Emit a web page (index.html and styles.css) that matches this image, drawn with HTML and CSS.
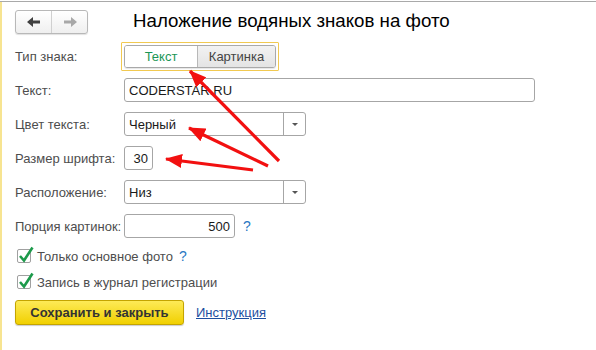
FILE: index.html
```html
<!DOCTYPE html>
<html>
<head>
<meta charset="utf-8">
<link rel="stylesheet" href="styles.css">
</head>
<body>
<div class="topline"></div>
<div class="wrap">
  <div class="side"></div>
  <div class="content">
    <div class="header">
      <div class="nav">
        <div class="navbtn">
          <svg width="14" height="10" viewBox="0 0 14 10"><path d="M0 5 L6 0 L6 3.5 L13 3.5 L13 6.5 L6 6.5 L6 10 Z" fill="#404040"/></svg>
        </div>
        <div class="navbtn">
          <svg width="14" height="10" viewBox="0 0 14 10"><path d="M14 5 L8 0 L8 3.5 L1 3.5 L1 6.5 L8 6.5 L8 10 Z" fill="#a8a8a8"/></svg>
        </div>
      </div>
      <div class="title">Наложение водяных знаков на фото</div>
    </div>
    <div class="form">
      <div class="row row-type">
        <div class="label">Тип знака:</div>
        <div class="group">
          <div class="seg">
            <div class="seg-item seg-on">Текст</div>
            <div class="seg-item seg-off">Картинка</div>
          </div>
        </div>
      </div>
      <div class="row">
        <div class="label">Текст:</div>
        <div class="field f-text">CODERSTAR.RU</div>
      </div>
      <div class="row">
        <div class="label">Цвет текста:</div>
        <div class="field f-select"><span class="sel-val">Черный</span><span class="sel-btn"><i class="tri"></i></span></div>
      </div>
      <div class="row">
        <div class="label">Размер шрифта:</div>
        <div class="field f-size">30</div>
      </div>
      <div class="row">
        <div class="label">Расположение:</div>
        <div class="field f-select"><span class="sel-val">Низ</span><span class="sel-btn"><i class="tri"></i></span></div>
      </div>
      <div class="row">
        <div class="label">Порция картинок:</div>
        <div class="field f-num">500</div>
        <span class="help">?</span>
      </div>
      <div class="check-row">
        <span class="cb"><svg width="18" height="20" viewBox="0 0 18 20"><path d="M3 11 L7 15.5 L15.5 2.5" fill="none" stroke="#1d9a4b" stroke-width="2.6"/></svg></span>
        <span class="cb-text">Только основное фото</span>
        <span class="help help2">?</span>
      </div>
      <div class="check-row">
        <span class="cb"><svg width="18" height="20" viewBox="0 0 18 20"><path d="M3 11 L7 15.5 L15.5 2.5" fill="none" stroke="#1d9a4b" stroke-width="2.6"/></svg></span>
        <span class="cb-text">Запись в журнал регистрации</span>
      </div>
      <div class="actions">
        <div class="btn-main">Сохранить и закрыть</div>
        <a class="link">Инструкция</a>
      </div>
    </div>
  </div>
</div>
<svg class="arrows" width="596" height="350" viewBox="0 0 596 350">
  <defs>
    <marker id="ah" markerUnits="userSpaceOnUse" markerWidth="18" markerHeight="14" refX="16" refY="7" orient="auto">
      <path d="M0 0 L17 7 L0 14 Z" fill="#f21010"/>
    </marker>
  </defs>
  <line x1="279" y1="161" x2="190" y2="71" stroke="#f21010" stroke-width="3.2" marker-end="url(#ah)"/>
  <line x1="268" y1="166" x2="189" y2="128" stroke="#f21010" stroke-width="3.2" marker-end="url(#ah)"/>
  <line x1="253" y1="170" x2="166" y2="159" stroke="#f21010" stroke-width="3.2" marker-end="url(#ah)"/>
</svg>
</body>
</html>
```

FILE: styles.css
```css
html, body {
  margin: 0;
  padding: 0;
}
body {
  width: 596px;
  height: 350px;
  overflow: hidden;
  background: #fff;
  position: relative;
  font-family: "Liberation Sans", Arial, sans-serif;
  font-size: 13px;
  color: #4d4d4d;
}
.topline {
  height: 1px;
  margin-top: 1px;
  background: #a9a9a9;
}
.wrap {
  display: flex;
  height: 348px;
}
.side {
  width: 2px;
  background: #f7e491;
}
.content {
  padding-left: 13px;
  flex: 1;
}
.header {
  display: flex;
  align-items: center;
  margin-top: 8px;
  height: 24px;
}
.nav {
  display: flex;
  width: 73px;
  height: 24px;
  box-sizing: border-box;
  border: 1px solid #b8b8b8;
  border-radius: 3px;
  background: linear-gradient(#ffffff, #efefef);
  box-shadow: 0 1px 1px rgba(0,0,0,0.12);
}
.navbtn {
  flex: 1;
  display: flex;
  align-items: center;
  justify-content: center;
}
.navbtn + .navbtn {
  border-left: 1px solid #d0d0d0;
}
.title {
  margin-left: 45px;
  font-size: 18.7px;
  color: #000;
  position: relative;
  top: -1px;
}
.form {
  margin-top: 8px;
  display: flex;
  flex-direction: column;
}
.row {
  display: flex;
  align-items: center;
  height: 24px;
  margin-bottom: 10px;
}
.row-type {
  height: 29px;
  margin-bottom: 7px;
}
.label {
  width: 109px;
  flex: none;
}
.group {
  margin-left: -3px;
  border: 1px solid #f1c951;
  padding: 2px;
  border-radius: 1px;
}
.seg {
  display: flex;
  height: 23px;
  box-sizing: border-box;
  border: 1px solid #a9a9a9;
  border-radius: 3px;
  overflow: hidden;
  box-shadow: 0 1px 1px rgba(0,0,0,0.1);
}
.seg-item {
  display: flex;
  align-items: center;
  justify-content: center;
}
.seg-on {
  width: 72px;
  background: #fff;
  color: #1b9656;
}
.seg-off {
  width: 77px;
  border-left: 1px solid #b8b8b8;
  background: linear-gradient(#f2f2f2, #e4e4e4);
  color: #444;
}
.field {
  box-sizing: border-box;
  height: 24px;
  border: 1px solid #a6a6a6;
  border-radius: 3px;
  background: #fff;
  color: #1a1a1a;
  font-weight: normal;
  display: flex;
  align-items: center;
  padding: 0 4px;
}
.f-text {
  width: 411px;
}
.f-select {
  width: 182px;
  padding: 0;
}
.sel-val {
  flex: 1;
  padding-left: 4px;
}
.sel-btn {
  width: 21px;
  height: 100%;
  border-left: 1px solid #a6a6a6;
  display: flex;
  align-items: center;
  justify-content: center;
}
.tri {
  width: 0;
  height: 0;
  border-left: 3px solid transparent;
  border-right: 3px solid transparent;
  border-top: 3px solid #555;
}
.f-size {
  width: 29px;
  justify-content: flex-end;
}
.f-num {
  width: 111px;
  justify-content: flex-end;
}
.help {
  color: #2a78c2;
  font-size: 14px;
  margin-left: 8px;
}
.check-row {
  display: flex;
  align-items: center;
  height: 26px;
  padding-left: 2px;
}
.form .row:nth-child(6) {
  margin-bottom: 5px;
}
.cb {
  width: 14px;
  height: 14px;
  box-sizing: border-box;
  border: 1px solid #a0a0a0;
  border-radius: 2px;
  background: #fff;
  position: relative;
  flex: none;
}
.cb svg {
  position: absolute;
  left: -1px;
  top: -5px;
}
.cb-text {
  margin-left: 6px;
}
.help2 {
  margin-left: 6px;
}
.actions {
  display: flex;
  align-items: center;
  margin-top: 5px;
}
.btn-main {
  width: 169px;
  height: 25px;
  box-sizing: border-box;
  border: 1px solid #c4a400;
  border-radius: 3px;
  background: linear-gradient(#fdea57, #f1d000);
  box-shadow: 0 1px 1px rgba(0,0,0,0.2);
  display: flex;
  align-items: center;
  justify-content: center;
  font-weight: bold;
  color: #333;
}
.link {
  margin-left: 12px;
  color: #1d4fa0;
  text-decoration: underline;
}
.arrows {
  position: absolute;
  left: 0;
  top: 0;
  pointer-events: none;
}
```
